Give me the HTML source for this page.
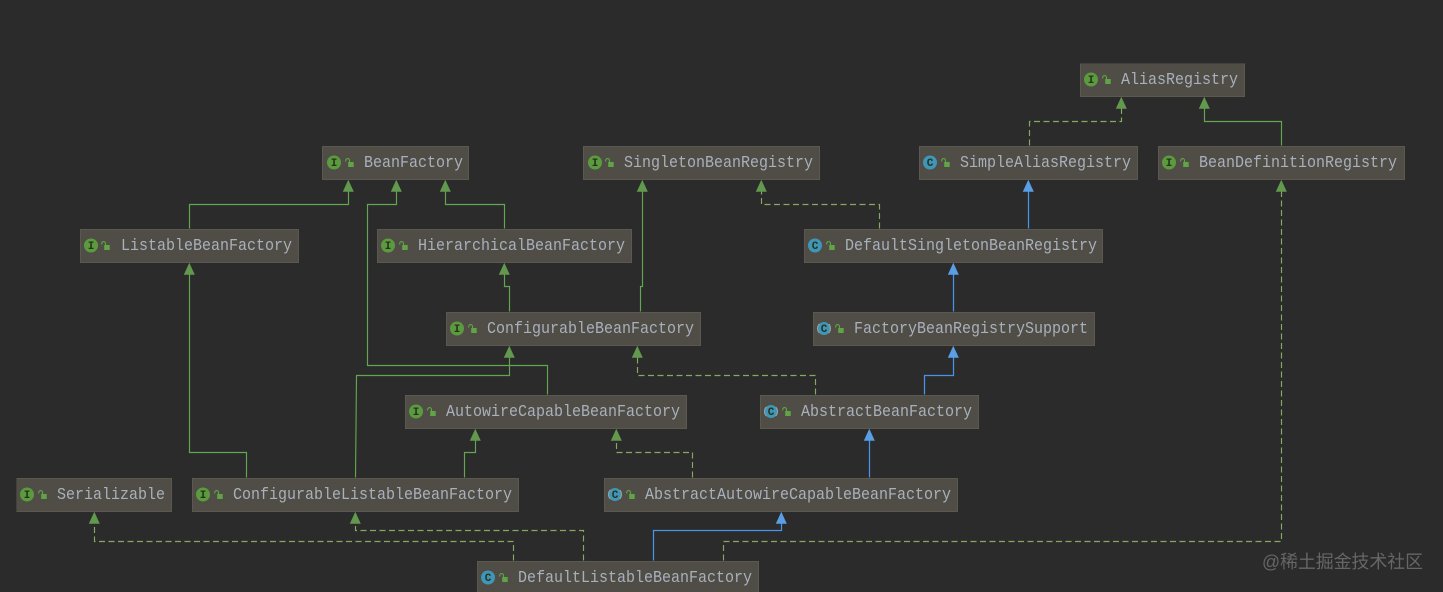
<!DOCTYPE html>
<html><head><meta charset="utf-8">
<style>
html,body{margin:0;padding:0;background:#2b2b2b;width:1443px;height:592px;overflow:hidden}
svg{display:block;position:absolute;left:0;top:0}
.b{fill:#4f4e44;stroke:#5a5950;stroke-width:1}
.t{font-family:"Liberation Mono",monospace;font-size:16.5px;fill:#a9b0bd;transform:translateY(-.8px)}
.s{fill:none;stroke:#62a650;stroke-width:1.15}
.d{fill:none;stroke:#86a862;stroke-width:1.15;stroke-dasharray:6 3.5}
.l{fill:none;stroke:#4a94e8;stroke-width:1.25}
.ag{fill:#62994f}
.ab{fill:#5a9fe6}
.ci{fill:#5b9a3f}
.cc{fill:#3f96b8}
.ca{fill:#3f96b8;stroke:#9aa5a5;stroke-width:1;stroke-dasharray:10 10.4;stroke-dashoffset:5}
.g{font-family:"Liberation Mono",monospace;font-size:11px;font-weight:bold;fill:#26331f;text-anchor:middle}
.lk{fill:#5fa445}
.lks{fill:none;stroke:#5fa445;stroke-width:1.1}
.w{font-family:"Liberation Sans","Noto Sans CJK SC",sans-serif;font-size:18px;fill:#666666}
</style></head>
<body>
<svg width="1443" height="592" viewBox="0 0 1443 592" xmlns="http://www.w3.org/2000/svg">
<defs>
<g id="lock"><rect x="2.200" y="4" width="5.500" height="5" class="lk"/><path d="M3.500 4.500V2.500A1.900 1.900 0 0 0 -0.300 2.500V3.500" class="lks"/></g>
</defs>
<g filter="url(#soft)">
<!-- edges -->
<g transform="translate(.5,-.5)">
<path class="d" d="M1029 146V122H1121V108"/>
<path class="s" d="M1281 146V122H1204V108"/>
<path class="s" d="M189 229V205H348V191"/>
<path class="s" d="M504 229V205H445V191"/>
<path class="s" d="M547 395V366H367V205H396V191"/>
<path class="s" d="M640 312V287H642V191"/>
<path class="s" d="M509 312V287H504V274"/>
<path class="d" d="M879 229V205H761V191"/>
<path class="l" d="M1028 229V191"/>
<path class="l" d="M953 312V274"/>
<path class="l" d="M924 395V376H953V357"/>
<path class="d" d="M815 395V376H637V357"/>
<path class="s" d="M355 478L356 376H509V357"/>
<path class="s" d="M246 478V453H189V274"/>
<path class="s" d="M464 478V453H475V440"/>
<path class="d" d="M692 478V453H616V440"/>
<path class="l" d="M869 478V440"/>
<path class="d" d="M513 561V542H94V523"/>
<path class="d" d="M583 561V531H355V523"/>
<path class="l" d="M653 561V531H781V523"/>
<path class="d" d="M723 561V542H1281V191"/>
</g>
<!-- arrows -->
<g transform="translate(.3,-.3)">
<path class="ag" d="M1121 97l5.500 12h-11z"/>
<path class="ag" d="M1204 97l5.500 12h-11z"/>
<path class="ag" d="M348 180l5.500 12h-11z"/>
<path class="ag" d="M396 180l5.500 12h-11z"/>
<path class="ag" d="M445 180l5.500 12h-11z"/>
<path class="ag" d="M642 180l5.500 12h-11z"/>
<path class="ag" d="M761 180l5.500 12h-11z"/>
<path class="ab" d="M1028 180l5.500 12h-11z"/>
<path class="ag" d="M1281 180l5.500 12h-11z"/>
<path class="ag" d="M189 263l5.500 12h-11z"/>
<path class="ag" d="M504 263l5.500 12h-11z"/>
<path class="ab" d="M953 263l5.500 12h-11z"/>
<path class="ag" d="M509 346l5.500 12h-11z"/>
<path class="ag" d="M637 346l5.500 12h-11z"/>
<path class="ab" d="M953 346l5.500 12h-11z"/>
<path class="ag" d="M475 429l5.500 12h-11z"/>
<path class="ag" d="M616 429l5.500 12h-11z"/>
<path class="ab" d="M869 429l5.500 12h-11z"/>
<path class="ag" d="M94 512l5.500 12h-11z"/>
<path class="ag" d="M355 512l5.500 12h-11z"/>
<path class="ab" d="M781 512l5.500 12h-11z"/>
</g>
<!-- nodes -->
<rect class="b" x="1080.500" y="63.500" width="164" height="33"/><circle class="ci" cx="1091" cy="79.500" r="7"/><text class="g" x="1091" y="83">I</text><use href="#lock" x="1103" y="75"/><text class="t" x="1121" y="85" textLength="117" lengthAdjust="spacingAndGlyphs">AliasRegistry</text>
<rect class="b" x="322.500" y="146.500" width="146" height="33"/><circle class="ci" cx="334" cy="162.500" r="7"/><text class="g" x="334" y="166">I</text><use href="#lock" x="346" y="158"/><text class="t" x="364" y="168" textLength="99" lengthAdjust="spacingAndGlyphs">BeanFactory</text>
<rect class="b" x="583.500" y="146.500" width="236" height="33"/><circle class="ci" cx="595" cy="162.500" r="7"/><text class="g" x="595" y="166">I</text><use href="#lock" x="606" y="158"/><text class="t" x="624" y="168" textLength="189" lengthAdjust="spacingAndGlyphs">SingletonBeanRegistry</text>
<rect class="b" x="919.500" y="146.500" width="218" height="33"/><circle class="cc" cx="930" cy="162.500" r="7"/><text class="g" x="930" y="166">C</text><use href="#lock" x="942" y="158"/><text class="t" x="960" y="168" textLength="171" lengthAdjust="spacingAndGlyphs">SimpleAliasRegistry</text>
<rect class="b" x="1158.500" y="146.500" width="246" height="33"/><circle class="ci" cx="1169" cy="162.500" r="7"/><text class="g" x="1169" y="166">I</text><use href="#lock" x="1181" y="158"/><text class="t" x="1199" y="168" textLength="198" lengthAdjust="spacingAndGlyphs">BeanDefinitionRegistry</text>
<rect class="b" x="80.500" y="229.500" width="218" height="33"/><circle class="ci" cx="91" cy="245.500" r="7"/><text class="g" x="91" y="249">I</text><use href="#lock" x="102" y="241"/><text class="t" x="121" y="251" textLength="171" lengthAdjust="spacingAndGlyphs">ListableBeanFactory</text>
<rect class="b" x="377.500" y="229.500" width="254" height="33"/><circle class="ci" cx="388" cy="245.500" r="7"/><text class="g" x="388" y="249">I</text><use href="#lock" x="400" y="241"/><text class="t" x="418" y="251" textLength="207" lengthAdjust="spacingAndGlyphs">HierarchicalBeanFactory</text>
<rect class="b" x="804.500" y="229.500" width="298" height="33"/><circle class="cc" cx="815" cy="245.500" r="7"/><text class="g" x="815" y="249">C</text><use href="#lock" x="827" y="241"/><text class="t" x="845" y="251" textLength="252" lengthAdjust="spacingAndGlyphs">DefaultSingletonBeanRegistry</text>
<rect class="b" x="446.500" y="312.500" width="254" height="33"/><circle class="ci" cx="457" cy="328.500" r="7"/><text class="g" x="457" y="332">I</text><use href="#lock" x="469" y="324"/><text class="t" x="487" y="334" textLength="207" lengthAdjust="spacingAndGlyphs">ConfigurableBeanFactory</text>
<rect class="b" x="813.500" y="312.500" width="281" height="33"/><circle class="ca" cx="824" cy="328.500" r="6.500"/><text class="g" x="824" y="332">C</text><use href="#lock" x="836" y="324"/><text class="t" x="854" y="334" textLength="234" lengthAdjust="spacingAndGlyphs">FactoryBeanRegistrySupport</text>
<rect class="b" x="405.500" y="395.500" width="281" height="33"/><circle class="ci" cx="416" cy="411.500" r="7"/><text class="g" x="416" y="415">I</text><use href="#lock" x="428" y="407"/><text class="t" x="446" y="417" textLength="234" lengthAdjust="spacingAndGlyphs">AutowireCapableBeanFactory</text>
<rect class="b" x="760.500" y="395.500" width="218" height="33"/><circle class="ca" cx="771" cy="411.500" r="6.500"/><text class="g" x="771" y="415">C</text><use href="#lock" x="783" y="407"/><text class="t" x="801" y="417" textLength="171" lengthAdjust="spacingAndGlyphs">AbstractBeanFactory</text>
<rect class="b" x="16.500" y="478.500" width="155" height="33"/><circle class="ci" cx="27" cy="494.500" r="7"/><text class="g" x="27" y="498">I</text><use href="#lock" x="39" y="490"/><text class="t" x="57" y="500" textLength="108" lengthAdjust="spacingAndGlyphs">Serializable</text>
<rect class="b" x="192.500" y="478.500" width="326" height="33"/><circle class="ci" cx="203" cy="494.500" r="7"/><text class="g" x="203" y="498">I</text><use href="#lock" x="215" y="490"/><text class="t" x="233" y="500" textLength="279" lengthAdjust="spacingAndGlyphs">ConfigurableListableBeanFactory</text>
<rect class="b" x="604.500" y="478.500" width="353" height="33"/><circle class="ca" cx="615" cy="494.500" r="6.500"/><text class="g" x="615" y="498">C</text><use href="#lock" x="627" y="490"/><text class="t" x="645" y="500" textLength="306" lengthAdjust="spacingAndGlyphs">AbstractAutowireCapableBeanFactory</text>
<rect class="b" x="477.500" y="561.500" width="281" height="40"/><circle class="cc" cx="488" cy="577.500" r="7"/><text class="g" x="488" y="581">C</text><use href="#lock" x="500" y="573"/><text class="t" x="518" y="583" textLength="234" lengthAdjust="spacingAndGlyphs">DefaultListableBeanFactory</text>
<text class="w" x="1262" y="568" textLength="161" lengthAdjust="spacingAndGlyphs">@稀土掘金技术社区</text>
</g>
<filter id="soft" x="0" y="0" width="100%" height="100%"><feGaussianBlur stdDeviation="0.3"/></filter>
</svg>
</body></html>
